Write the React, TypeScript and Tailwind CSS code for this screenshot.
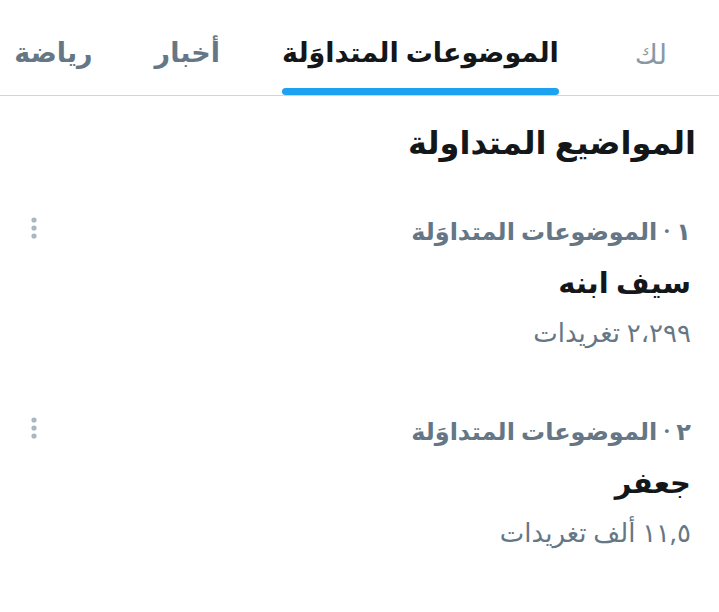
import React from 'react';

const tabs = [
  { label: 'لك', active: false, light: true },
  { label: 'الموضوعات المتداوَلة', active: true, light: false },
  { label: 'أخبار', active: false, light: false },
  { label: 'رياضة', active: false, light: false },
];

const trends = [
  { rank: '١', title: 'سيف ابنه', count: '٢،٢٩٩ تغريدات' },
  { rank: '٢', title: 'جعفر', count: '١١,٥ ألف تغريدات' },
];

const MoreIcon = () => (
  <svg width="8" height="24" viewBox="0 0 8 24" className="text-[#aab8c2]">
    <circle cx="4" cy="4" r="2.6" fill="currentColor" />
    <circle cx="4" cy="12" r="2.6" fill="currentColor" />
    <circle cx="4" cy="20" r="2.6" fill="currentColor" />
  </svg>
);

export default function App() {
  return (
    <div
      dir="rtl"
      className="w-[719px] h-[612px] overflow-hidden bg-white"
      style={{ fontFamily: '"Noto Sans", "DejaVu Sans", sans-serif' }}
    >
      {/* tabs */}
      <div className="flex h-[96px] items-stretch border-b border-[#ccd6dd] pr-[52px] gap-[62px] whitespace-nowrap">
        {tabs.map((t) => (
          <div
            key={t.label}
            className={t.light ? 'relative flex items-center pt-[10px] ml-[14px]' : 'relative flex items-center pt-[10px]'}
          >
            <span
              className={
                t.active
                  ? 'text-[27px] font-bold text-[#14171a]'
                  : t.light
                  ? 'text-[28px] font-normal text-[#8899a6]'
                  : 'text-[27px] font-bold text-[#657786]'
              }
            >
              {t.label}
            </span>
            {t.active && (
              <div className="absolute bottom-0 left-0 right-0 h-[7px] rounded-full bg-[#1da1f2]" />
            )}
          </div>
        ))}
      </div>

      {/* heading */}
      <div className="pr-[23px] pt-[22px] pb-[40px]">
        <h2 className="text-[32px] font-bold text-[#14171a] leading-[48px]">المواضيع المتداولة</h2>
      </div>

      {/* trends */}
      <div className="flex flex-col">
        {trends.map((tr) => (
          <div key={tr.rank} className="flex justify-between pr-[28px] pl-[30px] h-[200px]">
            <div className="flex flex-col pt-[5px]">
              <div className="text-[24px] font-semibold text-[#657786] leading-[40px]">
                {tr.rank} · الموضوعات المتداوَلة
              </div>
              <div className="mt-[8px] text-[29px] font-bold text-[#14171a] leading-[46px]">{tr.title}</div>
              <div className="mt-[7px] text-[26px] text-[#657786] leading-[40px]">{tr.count}</div>
            </div>
            <div className="pt-[10px]">
              <MoreIcon />
            </div>
          </div>
        ))}
      </div>
    </div>
  );
}
